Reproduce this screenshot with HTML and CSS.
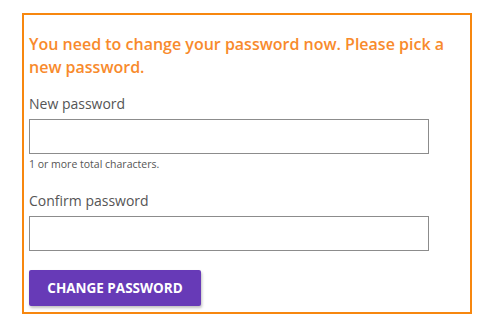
FILE: index.html
```html
<!DOCTYPE html>
<html>
<head>
<meta charset="utf-8">
<link rel="stylesheet" href="styles.css">
</head>
<body>
<form class="panel">
  <h2 class="notice">You need to change your password now. Please pick a new password.</h2>
  <div class="field">
    <label class="label" for="pw1">New password</label>
    <input class="input" id="pw1" type="password">
    <div class="hint">1 or more total characters.</div>
  </div>
  <div class="field">
    <label class="label" for="pw2">Confirm password</label>
    <input class="input" id="pw2" type="password">
  </div>
  <button class="btn" type="button">CHANGE PASSWORD</button>
</form>
</body>
</html>
```
FILE: styles.css
```css
html, body {
  margin: 0;
  padding: 0;
  background: #fff;
}
body {
  font-family: "Open Sans", "Liberation Sans", sans-serif;
  color: #555;
}
.panel {
  box-sizing: border-box;
  width: 450px;
  margin: 13px 0 0 22px;
  border: 2px solid #f7870f;
  padding: 18px 5px 6px 5px;
  display: flex;
  flex-direction: column;
  align-items: flex-start;
}
.notice {
  margin: 0 0 15px 0;
  font-size: 16px;
  line-height: 23px;
  font-weight: 600;
  color: #f88a2c;
}
.field {
  display: flex;
  flex-direction: column;
  margin-bottom: 19px;
}
.label {
  font-size: 14px;
  line-height: 20px;
  color: #555;
  margin-bottom: 5px;
}
.input {
  box-sizing: border-box;
  width: 400px;
  height: 35px;
  border: 1px solid #8c8c8c;
  margin: 0;
  padding: 0 6px;
  background: #fff;
}
.hint {
  font-size: 10.5px;
  line-height: 16px;
  color: #555;
  margin-top: 2px;
}
.btn {
  width: 172px;
  height: 36px;
  border: none;
  border-radius: 2px;
  background: #673ab7;
  color: #fff;
  font-family: "Open Sans", "Liberation Sans", sans-serif;
  font-weight: 700;
  font-size: 13.5px;
  letter-spacing: 0;
  box-shadow: 1px 2px 3px rgba(0,0,0,0.25);
  padding: 0;
}
```
